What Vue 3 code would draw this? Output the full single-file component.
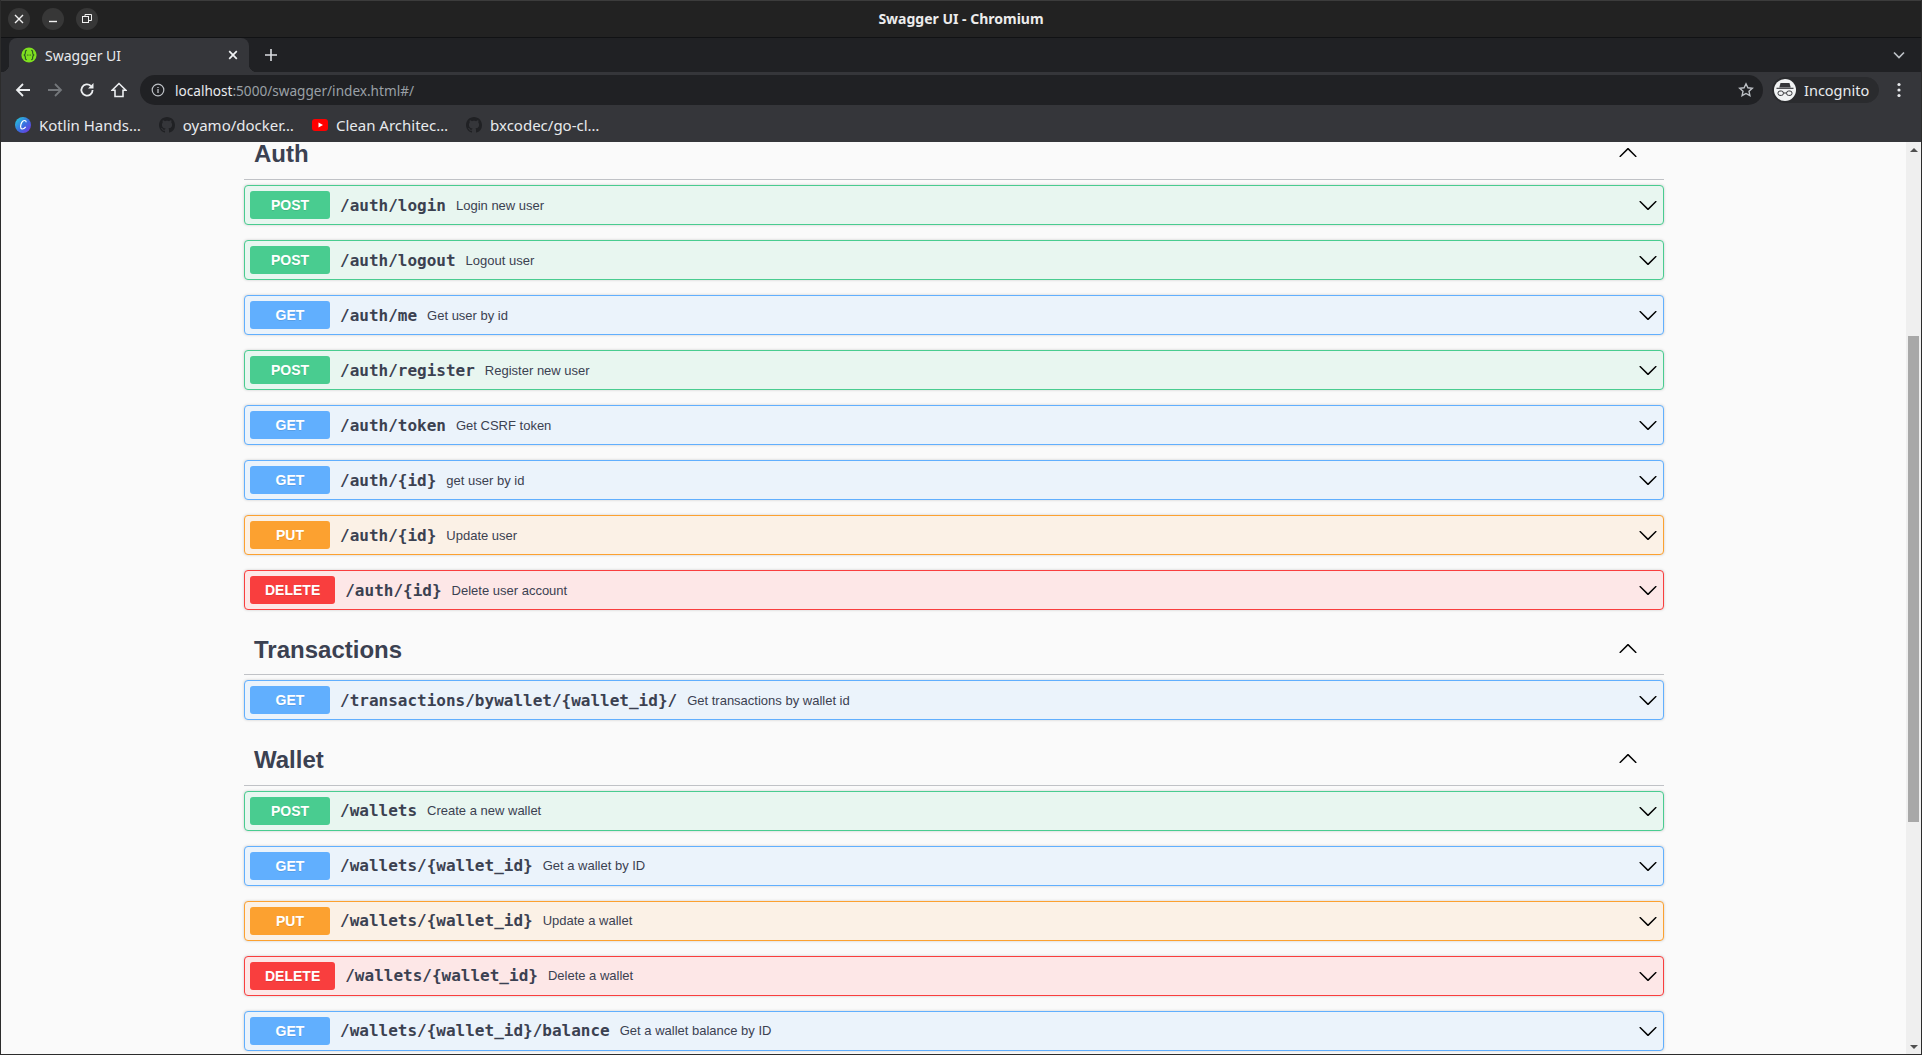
<script setup>
const sections = [
  { name: 'Auth', ops: [
    ['post', '/auth/login', 'Login new user'],
    ['post', '/auth/logout', 'Logout user'],
    ['get', '/auth/me', 'Get user by id'],
    ['post', '/auth/register', 'Register new user'],
    ['get', '/auth/token', 'Get CSRF token'],
    ['get', '/auth/{id}', 'get user by id'],
    ['put', '/auth/{id}', 'Update user'],
    ['delete', '/auth/{id}', 'Delete user account'],
  ]},
  { name: 'Transactions', ops: [
    ['get', '/transactions/bywallet/{wallet_id}/', 'Get transactions by wallet id'],
  ]},
  { name: 'Wallet', ops: [
    ['post', '/wallets', 'Create a new wallet'],
    ['get', '/wallets/{wallet_id}', 'Get a wallet by ID'],
    ['put', '/wallets/{wallet_id}', 'Update a wallet'],
    ['delete', '/wallets/{wallet_id}', 'Delete a wallet'],
    ['get', '/wallets/{wallet_id}/balance', 'Get a wallet balance by ID'],
  ]},
]
const gh = 'M8 0C3.58 0 0 3.58 0 8c0 3.54 2.29 6.53 5.47 7.59.4.07.55-.17.55-.38 0-.19-.01-.82-.01-1.49-2.01.37-2.53-.49-2.69-.94-.09-.23-.48-.94-.82-1.13-.28-.15-.68-.52-.01-.53.63-.01 1.08.58 1.23.82.72 1.21 1.87.87 2.33.66.07-.52.28-.87.51-1.07-1.78-.2-3.64-.89-3.64-3.95 0-.87.31-1.59.82-2.15-.08-.2-.36-1.02.08-2.12 0 0 .67-.21 2.2.82.64-.18 1.32-.27 2-.27s1.36.09 2 .27c1.53-1.04 2.2-.82 2.2-.82.44 1.1.16 1.92.08 2.12.51.56.82 1.27.82 2.15 0 3.07-1.87 3.75-3.65 3.95.29.25.54.73.54 1.48 0 1.07-.01 1.93-.01 2.2 0 .21.15.46.55.38A8.01 8.01 0 0 0 16 8c0-4.42-3.58-8-8-8z'
</script>

<template>
  <div class="window">
    <header class="titlebar">
      <div class="winbtns">
        <span class="winbtn">
          <svg width="12" height="12" viewBox="0 0 12 12"><path d="M2 2l8 8M10 2l-8 8" stroke="#f1f1f1" stroke-width="1.4" fill="none"/></svg>
        </span>
        <span class="winbtn">
          <svg width="12" height="12" viewBox="0 0 12 12"><path d="M2 8.500h8" stroke="#f1f1f1" stroke-width="1.400" fill="none"/></svg>
        </span>
        <span class="winbtn">
          <svg width="12" height="12" viewBox="0 0 12 12"><rect x="1.500" y="3.500" width="6" height="6" stroke="#f1f1f1" fill="none"/><path d="M4 3.500V1.500h6.500v6h-3" stroke="#f1f1f1" fill="none"/></svg>
        </span>
      </div>
      <div class="wintitle">Swagger UI - Chromium</div>
    </header>

    <div class="tabstrip">
      <div class="tab">
        <svg class="favicon" width="16" height="16" viewBox="0 0 16 16">
          <circle cx="8" cy="8" r="7.600" fill="#7fe01f"/>
          <path d="M5.800 3.400c-1.500 0-1.400 1-1.400 2.100 0 1.200-.5 2-1.100 2.500.6.500 1.100 1.300 1.100 2.500 0 1.100-.1 2.100 1.400 2.100M10.200 3.400c1.500 0 1.400 1 1.400 2.100 0 1.200.5 2 1.100 2.500-.6.500-1.100 1.300-1.100 2.500 0 1.100.1 2.100-1.400 2.100" stroke="#2c5a22" stroke-width="1.200" fill="none"/>
          <path d="M6.400 8h.01M8 8h.01M9.600 8h.01" stroke="#2c5a22" stroke-width="1.200" stroke-linecap="round"/>
        </svg>
        <span class="tabtitle">Swagger UI</span>
        <svg width="10" height="10" viewBox="0 0 10 10"><path d="M1.200 1.200l7.600 7.600M8.800 1.200l-7.600 7.600" stroke="#f1f3f4" stroke-width="1.700" fill="none"/></svg>
      </div>
      <svg class="newtab" width="14" height="14" viewBox="0 0 14 14"><path d="M7 1v12M1 7h12" stroke="#dadce0" stroke-width="1.600" fill="none"/></svg>
      <svg class="tabsearch" width="12" height="8" viewBox="0 0 12 8"><path d="M1 1.500l5 5 5-5" stroke="#bdc1c6" stroke-width="1.700" fill="none"/></svg>
    </div>

    <div class="toolbar">
      <svg class="navicon" width="16" height="16" viewBox="0 0 16 16"><path d="M15 8H2M8 2L2 8l6 6" stroke="#eceef0" stroke-width="1.800" fill="none"/></svg>
      <svg class="navicon" width="16" height="16" viewBox="0 0 16 16"><path d="M1 8h13M8 2l6 6-6 6" stroke="#74777b" stroke-width="1.800" fill="none"/></svg>
      <svg class="navicon" width="16" height="16" viewBox="0 0 16 16"><path d="M13.600 8a5.600 5.600 0 1 1-1.700-4" stroke="#eceef0" stroke-width="1.800" fill="none"/><path d="M14.500 1v5.500H9z" fill="#eceef0"/></svg>
      <svg class="navicon" width="16" height="16" viewBox="0 0 16 16"><path d="M8 1.500L1.200 8.200H4v6.300h8V8.200h2.800z" stroke="#eceef0" stroke-width="1.600" fill="none"/></svg>
      <div class="omnibox">
        <svg width="14" height="14" viewBox="0 0 14 14"><circle cx="7" cy="7" r="5.800" stroke="#bdc1c6" stroke-width="1.200" fill="none"/><path d="M7 6v4M7 3.900v1.200" stroke="#bdc1c6" stroke-width="1.300"/></svg>
        <span class="url"><b>localhost</b>:5000/swagger/index.html#/</span>
        <svg class="star" width="16" height="16" viewBox="0 0 16 16"><path d="M8 1.800l1.900 4 4.400.5-3.300 3 .9 4.400L8 11.500l-3.900 2.200.9-4.400-3.300-3 4.400-.5z" stroke="#bdc1c6" stroke-width="1.400" fill="none"/></svg>
      </div>
      <div class="incognito">
        <span class="incavatar">
          <svg width="20" height="16" viewBox="0 0 20 16">
            <path d="M5.500 1h9l1.200 4.600H4.300z" fill="#35363a"/>
            <path d="M1.500 6.300h17" stroke="#35363a" stroke-width="1.100"/>
            <rect x="3" y="9" width="5.400" height="4.400" rx="2" stroke="#35363a" stroke-width="1" fill="none"/>
            <rect x="11.600" y="9" width="5.400" height="4.400" rx="2" stroke="#35363a" stroke-width="1" fill="none"/>
            <path d="M8.400 11h3.200" stroke="#35363a" stroke-width="1"/>
          </svg>
        </span>
        <span class="inctext">Incognito</span>
      </div>
      <svg class="kebab" width="4" height="16" viewBox="0 0 4 16"><circle cx="2" cy="2.500" r="1.600" fill="#e8eaed"/><circle cx="2" cy="8" r="1.600" fill="#e8eaed"/><circle cx="2" cy="13.500" r="1.600" fill="#e8eaed"/></svg>
    </div>

    <nav class="bookmarks">
      <span class="bm">
        <svg width="16" height="16" viewBox="0 0 16 16">
          <defs><linearGradient id="cg" x1="0" y1="0" x2="1" y2="1"><stop offset="0" stop-color="#22d3d8"/><stop offset=".55" stop-color="#3b6be0"/><stop offset="1" stop-color="#7a2fe0"/></linearGradient></defs>
          <circle cx="8" cy="8" r="8" fill="url(#cg)"/>
          <path d="M11.200 5.200C11 2.800 8.200 3 6.800 5.400 5.300 8 5 11.800 7 12c1.500.1 2.800-1 3.700-2.200" stroke="#fff" stroke-width="1.200" fill="none"/>
        </svg>
        <span>Kotlin Hands…</span>
      </span>
      <span class="bm">
        <svg width="16" height="16" viewBox="0 0 16 16"><path :d="gh" fill="#202124"/></svg>
        <span>oyamo/docker…</span>
      </span>
      <span class="bm">
        <svg width="16" height="16" viewBox="0 0 16 16"><rect y="2" width="16" height="12" rx="3" fill="#f00"/><path d="M6.500 5.500v5L11 8z" fill="#fff"/></svg>
        <span>Clean Architec…</span>
      </span>
      <span class="bm">
        <svg width="16" height="16" viewBox="0 0 16 16"><path :d="gh" fill="#202124"/></svg>
        <span>bxcodec/go-cl…</span>
      </span>
    </nav>

    <div class="viewport">
      <main class="page">
        <div class="content">
          <section v-for="s in sections" :key="s.name" class="tag">
            <h3 class="taghead">
              <span>{{ s.name }}</span>
              <svg class="uparrow" width="20" height="20" viewBox="0 0 20 20"><path d="M17.418 14.908c.272.268.709.268.979 0s.271-.701 0-.969l-7.908-7.830c-.27-.268-.707-.268-.979 0l-7.908 7.830c-.27.268-.27.701 0 .969.271.268.709.268.979 0L10 7.767l7.418 7.141z"/></svg>
            </h3>
            <div v-for="(op, i) in s.ops" :key="i" class="op" :class="op[0]">
              <span class="badge">{{ op[0].toUpperCase() }}</span>
              <span class="path">{{ op[1] }}</span>
              <span class="desc">{{ op[2] }}</span>
              <svg width="20" height="20" viewBox="0 0 20 20"><path d="M17.418 6.109c.272-.268.709-.268.979 0s.271.701 0 .969l-7.908 7.830c-.27.268-.707.268-.979 0l-7.908-7.830c-.27-.268-.27-.701 0-.969.271-.268.709-.268.979 0L10 13.250l7.418-7.141z"/></svg>
            </div>
          </section>
        </div>
      </main>
      <aside class="scrollbar">
        <span class="sb-up"></span>
        <span class="sb-track"><span class="sb-thumb"></span></span>
        <span class="sb-down"></span>
      </aside>
    </div>
  </div>
</template>

<style>
html, body { margin: 0; background: #2b2b2b; overflow: hidden; }
</style>

<style scoped>
.window {
  width: 1922px;
  height: 1055px;
  display: flex;
  flex-direction: column;
  overflow: hidden;
  box-sizing: border-box;
  border-left: 1px solid #2c2c2c;
  border-right: 1px solid #2c2c2c;
  border-bottom: 1px solid #2c2c2c;
  font-family: "Noto Sans", Roboto, sans-serif;
}
.titlebar {
  height: 38px;
  flex: none;
  box-sizing: border-box;
  background: #222222;
  border-top: 1px solid #3c3c3c;
  border-bottom: 1px solid #111214;
  position: relative;
  display: flex;
  align-items: center;
  padding-left: 7px;
}
.winbtns { display: flex; gap: 12px; }
.winbtn {
  width: 22px;
  height: 22px;
  border-radius: 50%;
  background: #373737;
  display: flex;
  align-items: center;
  justify-content: center;
}
.wintitle {
  position: absolute;
  left: 0;
  right: 0;
  top: 9px;
  text-align: center;
  color: #ececec;
  font-size: 14px;
  line-height: 18px;
  font-weight: 700;
}
.tabstrip {
  height: 34px;
  flex: none;
  background: #202124;
  display: flex;
  align-items: flex-end;
}
.tab {
  position: relative;
  width: 240px;
  height: 34px;
  margin-left: 8px;
  box-sizing: border-box;
  padding: 0 11px 0 12px;
  background: #35363a;
  border-radius: 8px 8px 0 0;
  display: flex;
  align-items: center;
  gap: 8px;
}
.tab::before, .tab::after {
  content: "";
  position: absolute;
  bottom: 0;
  width: 8px;
  height: 8px;
}
.tab::before { left: -8px; background: radial-gradient(circle at 0 0, #202124 8px, #35363a 8.500px); }
.tab::after { right: -8px; background: radial-gradient(circle at 100% 0, #202124 8px, #35363a 8.500px); }
.tabtitle {
  flex: 1;
  color: #e8eaed;
  font-size: 14px;
}
.newtab { margin: 0 0 10px 15px; }
.tabsearch { margin: 0 16px 13px auto; }
.toolbar {
  height: 36px;
  flex: none;
  background: #35363a;
  display: flex;
  align-items: center;
}
.navicon { margin-left: 14px; flex: none; }
.navicon + .navicon { margin-left: 16px; }
.omnibox {
  width: 1623px;
  height: 30px;
  margin-left: 13px;
  box-sizing: border-box;
  padding: 0 9px 0 11px;
  border-radius: 15px;
  background: #202124;
  display: flex;
  align-items: center;
  gap: 10px;
}
.url {
  flex: 1;
  color: #9aa0a6;
  font-size: 13.600px;
}
.url b { color: #e8eaed; font-weight: 400; }
.incognito {
  margin-left: 9px;
  width: 107px;
  height: 26px;
  box-sizing: border-box;
  border: 1px solid #2a2b2e;
  background: #2a2b2e;
  border-radius: 13px;
  display: flex;
  align-items: center;
  gap: 8px;
}
.incavatar {
  width: 22px;
  height: 22px;
  margin-left: 1px;
  border-radius: 50%;
  background: #f1f3f4;
  display: flex;
  align-items: center;
  justify-content: center;
}
.inctext { color: #e8eaed; font-size: 14.500px; }
.kebab { margin-left: 18px; }
.bookmarks {
  height: 34px;
  flex: none;
  box-sizing: border-box;
  background: #35363a;
  display: flex;
  align-items: center;
  padding: 0 0 1px 14px;
  gap: 18px;
  color: #e8eaed;
  font-size: 15px;
}
.bm { display: flex; align-items: center; gap: 8px; }
.viewport {
  flex: 1;
  min-height: 0;
  display: flex;
  background: #fafafa;
}
.page { flex: 1; min-width: 0; overflow: hidden; }
.content {
  width: 1420px;
  margin: -12.400px 0 0 243px;
}
.tag { margin: 0; }
.taghead {
  height: 50.400px;
  box-sizing: border-box;
  margin: 0 0 5px;
  padding: 0 26px 0 10px;
  border-bottom: 1px solid rgba(59, 65, 81, 0.3);
  display: flex;
  align-items: center;
  justify-content: space-between;
  font-family: "Liberation Sans", Arial, sans-serif;
  font-size: 24px;
  font-weight: 700;
  color: #3b4151;
}
.uparrow { margin-bottom: 4px; }
.op {
  height: 40px;
  box-sizing: border-box;
  margin-bottom: 15px;
  padding: 0 5px;
  border: 1px solid;
  border-radius: 4px;
  box-shadow: 0 0 3px rgba(0, 0, 0, 0.19);
  display: flex;
  align-items: center;
  font-family: "Liberation Sans", Arial, sans-serif;
}
.badge {
  min-width: 80px;
  box-sizing: border-box;
  padding: 6px 15px;
  border-radius: 3px;
  color: #fff;
  font-size: 14px;
  line-height: 16px;
  font-weight: 700;
  text-align: center;
  text-shadow: 0 1px 0 rgba(0, 0, 0, 0.1);
}
.path {
  padding: 0 10px;
  font-family: "DejaVu Sans Mono", monospace;
  font-size: 16px;
  font-weight: 700;
  color: #3b4151;
}
.desc {
  flex: 1;
  font-size: 13px;
  color: #3b4151;
}
.post { background: #e8f6f0; border-color: #49cc90; }
.post .badge { background: #49cc90; }
.get { background: #ebf3fb; border-color: #61affe; }
.get .badge { background: #61affe; }
.put { background: #fbf1e6; border-color: #fca130; }
.put .badge { background: #fca130; }
.delete { background: #fde7e7; border-color: #f93e3e; }
.delete .badge { background: #f93e3e; }
.scrollbar {
  width: 15px;
  flex: none;
  background: #efefef;
  display: flex;
  flex-direction: column;
  align-items: center;
}
.sb-up, .sb-down { width: 0; height: 0; border-left: 4px solid transparent; border-right: 4px solid transparent; flex: none; }
.sb-up { margin-top: 6px; border-bottom: 4px solid #505050; }
.sb-down { margin-bottom: 5px; border-top: 4px solid #505050; }
.sb-track { flex: 1; width: 100%; display: flex; flex-direction: column; padding-top: 184px; box-sizing: border-box; }
.sb-thumb { height: 486px; margin: 0 2px; background: #a8a8a8; }
</style>
